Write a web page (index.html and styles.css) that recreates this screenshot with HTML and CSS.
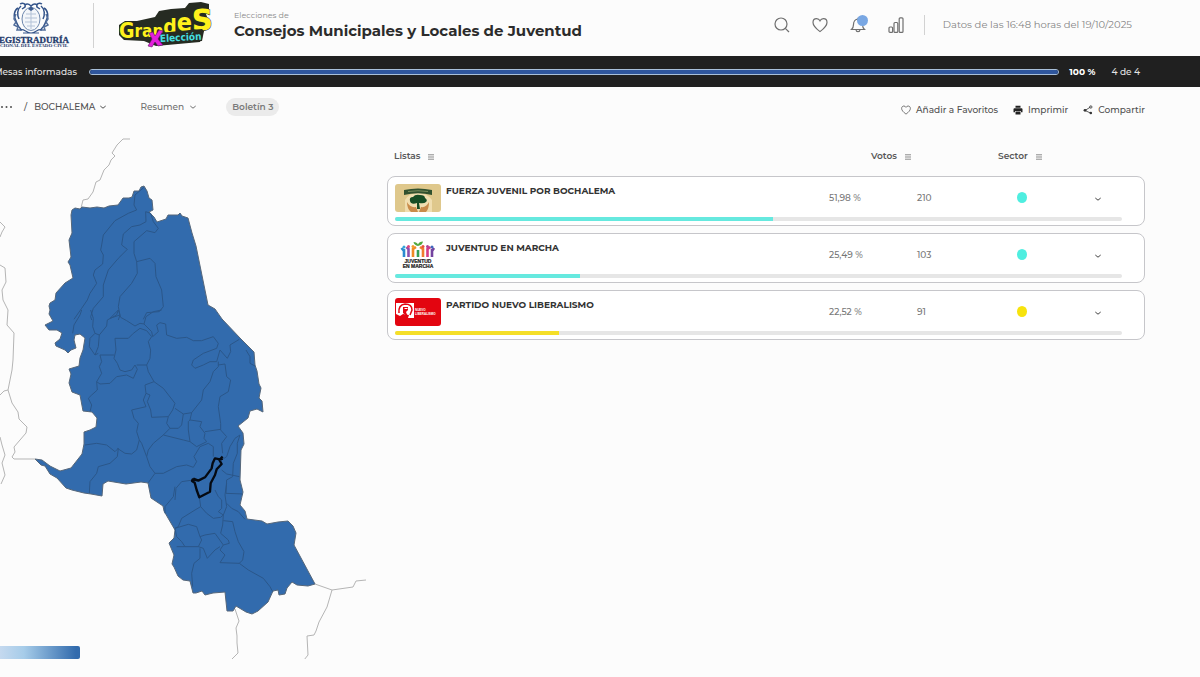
FILE: index.html
```html
<!DOCTYPE html>
<html lang="es">
<head>
<meta charset="utf-8">
<meta name="viewport" content="width=device-width, initial-scale=1">
<title>Consejos Municipales y Locales de Juventud</title>
<link rel="stylesheet" href="styles.css">
</head>
<body>
<svg width="0" height="0" class="defs" aria-hidden="true">
  <symbol id="chev" viewBox="0 0 8 8"><path d="M1.300 3 4 5.200 6.700 3" fill="none" stroke="currentColor" stroke-width="1"/></symbol>
  <symbol id="sort" viewBox="0 0 8 8"><path d="M1 1.800h6M1 4h6M1 6.200h6" fill="none" stroke="currentColor" stroke-width="1"/></symbol>
  <symbol id="heart" viewBox="0 0 16 16"><path d="M8 14.600C3.600 11.200 1 8.600 1 5.400 1 3.200 2.600 1.600 4.600 1.600 6.100 1.600 7.300 2.400 8 3.800 8.700 2.400 9.900 1.600 11.400 1.600 13.400 1.600 15 3.200 15 5.400 15 8.600 12.400 11.200 8 14.600Z" fill="none" stroke="currentColor" stroke-width="1.200"/></symbol>
</svg>

<header class="top">
  <a class="brand" href="#" aria-label="Registraduría Nacional del Estado Civil">
    <svg width="80" height="50" viewBox="-9 0 80 50">
      <g fill="none" stroke="#34548a" stroke-width="1.500">
        <path d="M18 8c-4 2-5 9-2 13 1 3 2 6 5 8M21 6c-4 3-4 9-2 13M44 8c4 2 5 9 2 13-1 3-2 6-5 8M41 6c4 3 4 9 2 13"/>
        <path d="M20 4c3-2 6 0 5 3l-3 2M42 4c-3-2-6 0-5 3l3 2M25 5c2-2 4-1 6 1 2-2 4-3 6-1"/>
        <path d="M16 14l-2 5 2 3-2 3 4 2-1 3 5 0M46 14l2 5-2 3 2 3-4 2 1 3-5 0" stroke="#54709d"/>
        <path d="M20 30c4-2 6 3 11 3s7-5 11-3M23 33h16" stroke-width="1.100"/>
      </g>
      <ellipse cx="31" cy="19" rx="9" ry="11.500" fill="#f3f6fa" stroke="#6d87ad"/>
      <path d="M26 14h10M25 18h12M25 22h12M27 26h8M31 9v20" stroke="#b3c2d7" fill="none"/>
      <path d="M28 9l3-3 3 3-3 2z" fill="#3d5c8f"/>
      <text x="69" y="43" text-anchor="end" class="brand-name">REGISTRADURÍA</text>
      <text x="68" y="47" text-anchor="end" class="brand-sub">NACIONAL DEL ESTADO CIVIL</text>
    </svg>
  </a>
  <span class="rule tall"></span>
  <svg class="campaign" width="94" height="48" viewBox="117 0 94 48" role="img" aria-label="Grandes x Elección">
    <path d="M119 24l6-4 12 0 18-4 4-6 12-2 14-1 4-5 12-1 8 2 0 6-3 4 3 8-3 7-3 3-3 10-44 4-12-5-20-1-5-5z" fill="#262b22"/>
    <text x="119" y="37" class="campaign-main"><tspan font-size="21">G</tspan><tspan font-size="17" dy="-1">ran</tspan><tspan font-size="21" dy="-3">d</tspan><tspan font-size="25" dy="-3">e</tspan><tspan font-size="38" dy="-1">s</tspan></text>
    <path d="M158 42l0-10 44-4 2 2-2 10-43 4z" fill="#262b22"/>
    <path d="M149 32l4-1 2 4 4-6 4 1-5 8 5 6-5 1-3-4-3 5-4-1 4-7z" fill="#e21fdb" stroke="#5c1660" stroke-width=".6"/>
    <text x="160" y="41" class="campaign-word" transform="rotate(-3 159 41)">Elección</text>
  </svg>
  <div class="heading">
    <span class="kicker">Elecciones de</span>
    <h1>Consejos Municipales y Locales de Juventud</h1>
  </div>
  <nav class="tools" aria-label="Herramientas">
    <button type="button" aria-label="Buscar"><svg width="16" height="16" viewBox="0 0 16 16" fill="none" stroke="currentColor" stroke-width="1.200"><circle cx="7" cy="7" r="6"/><path d="M11.300 11.300 15 15"/></svg></button>
    <button type="button" aria-label="Favoritos"><svg width="16" height="16"><use href="#heart"/></svg></button>
    <button type="button" class="bell" aria-label="Notificaciones"><svg width="16" height="16" viewBox="0 0 16 16" fill="none" stroke="currentColor" stroke-width="1.200"><path d="M1.500 12.500c1.800-1.600 2-3 2-5 0-3.300 1.900-5.300 4.500-5.300s4.500 2 4.500 5.300c0 2 .2 3.400 2 5zM6 12.700c.2 2.600 3.800 2.600 4 0M8 2.200V.8"/></svg><span class="dot"></span></button>
    <button type="button" aria-label="Estadísticas"><svg width="16" height="16" viewBox="0 0 16 16" fill="none" stroke="currentColor" stroke-width="1.200"><rect x="1" y="10" width="3.600" height="5.400" rx="1"/><rect x="6" y="5.500" width="3.800" height="9.900" rx="1"/><rect x="11.200" y=".8" width="3.800" height="14.600" rx="1"/></svg></button>
  </nav>
  <span class="rule"></span>
  <p class="stamp">Datos de las 16:48 horas del 19/10/2025</p>
</header>

<section class="status">
  <label for="mesas">Mesas informadas</label>
  <progress id="mesas" value="100" max="100"></progress>
  <strong>100 %</strong>
  <span>4 de 4</span>
</section>

<div class="bar">
  <nav class="crumbs" aria-label="Ruta">
    <button type="button" class="more" aria-label="Niveles superiores"><svg width="12" height="4" viewBox="0 0 12 4" fill="currentColor"><circle cx="2" cy="2" r="1"/><circle cx="6.500" cy="2" r="1"/><circle cx="11" cy="2" r="1"/></svg></button>
    <span class="slash">/</span>
    <button type="button" class="place">BOCHALEMA <svg width="8" height="8"><use href="#chev"/></svg></button>
    <button type="button" class="view">Resumen <svg width="8" height="8"><use href="#chev"/></svg></button>
    <span class="pill">Boletín 3</span>
  </nav>
  <div class="actions">
    <button type="button"><svg width="10" height="10"><use href="#heart"/></svg>Añadir a Favoritos</button>
    <button type="button"><svg width="10" height="10" viewBox="0 0 10 10"><path d="M2.500.8h5v2h-5zM1.500 3.200h7q1 0 1 1v3h-1.500v-1.200h-6v1.200H.5v-3q0-1 1-1zM2.500 6.500h5v3h-5z" fill="#222"/></svg>Imprimir</button>
    <button type="button"><svg width="10" height="10" viewBox="0 0 10 10"><path d="M2 5.500 7.500 2M2 5.500l5.500 2.500" stroke="#333" stroke-width=".8" fill="none"/><circle cx="2" cy="5.300" r="1.400" fill="#333"/><circle cx="7.800" cy="2" r="1.200" fill="none" stroke="#333" stroke-width=".8"/><circle cx="7.800" cy="8" r="1.300" fill="#333"/></svg>Compartir</button>
  </div>
</div>

<main class="content">
  <div class="map">
    <svg viewBox="0 130 387 540" role="img" aria-label="Mapa de Norte de Santander">
      <g class="neighbours">
        <path d="M130 139 123 139 117 145 112 153 115 156 111 160 109 165 104 170 100 180 96 182 93 192 88 199 83 200 81 208"/>
        <path d="M0 222l5 5-3 5-2 5M0 265 5 268 6 282 2 290 3 300 8 310 7 325 14 333 13 360 12 370 8 390 12 403 18 412 19 419 27 427 26 433 14 447 15 452 12 457 14 459 35 459M8 390 4 391 0 395M0 437 2 445 5 455 2 463 5 475 1 484"/>
        <path d="M315 584l17 6 21-3 3-6 10-1M332 590l-5 17-8 15-3 9-2 4-7 1 1 19-4 5M235 609l4 12-3 7 1 8 0 7 1 10-7 7"/>
      </g>
      <path class="land" d="M72 210 75 208 80 209 82 207 90 208 97 207 104 208 109 206 118 205 123 198 129 198 132 197 134 191 139 191 141 187 144 186 147 191 149 198 152 200 153 210 149 212 154 217 157 222 166 219 168 215 178 215 180 213 182 216 188 218 192 233 196 246 208 305 215 309 222 319 240 338 254 352 255 365 257 371 259 384 261 388 259 398 262 401 263 412 257 409 250 411 248 418 238 426 243 433 244 444 241 450 240 480 243 492 240 505 245 511 247 519 262 521 267 524 278 522 288 521 293 526 296 533 294 545 315 584 308 586 297 585 292 582 287 588 285 594 279 595 278 590 273 591 268 602 258 611 252 614 246 612 236 606 233 611 227 611 225 592 213 593 205 595 202 591 196 593 193 593 190 581 183 580 178 576 174 567 172 564 174 555 169 543 174 538 175 530 168 518 164 511 163 506 151 498 148 483 141 482 126 484 120 483 108 481 103 484 102 496 91 494 84 493 72 490 66 488 57 478 50 474 45 466 41 465 35 459 42 460 50 466 60 471 71 468 82 454 84 444 84 432 90 430 96 427 97 418 92 412 83 411 80 395 72 392 69 383 71 374 69 369 79 366 80 358 83 350 85 338 80 334 75 335 74 340 76 348 71 350 68 353 65 350 56 346 55 343 60 339 62 333 57 330 49 330 45 325 53 321 49 314 50 310 49 306 50 303 55 300 56 293 65 283 73 278 70 265 68 262 71 257 69 240 72 233 71 215Z"/>
      <g class="borders" transform="translate(0 130) scale(.3333)">
        <path d="M432 172 405 195 402 225 410 240 385 250 345 272 310 315 305 345 302 360 310 375 308 402 285 420 280 435 290 460 270 490 262 510 245 535 222 568"/>
        <path d="M437 245 438 275 420 285 395 290 370 312 365 345 382 358 355 385 325 420 310 465 310 500 280 535 272 560 275 570"/>
        <path d="M437 245 452 250 460 275 475 295 465 308 440 302 402 335 402 370 410 395 412 430 395 460 360 500 355 530 360 555 330 565"/>
        <path d="M410 395 450 385 465 400 468 440 485 480 490 530 478 545 440 548 430 568M360 555 355 570"/>
      </g>
      <g class="borders" transform="translate(0 310) scale(.3333)">
        <path d="M245 0 240 15 222 45 218 70M272 0 280 25 278 50 285 70 270 85 268 110 285 135 295 130M285 70 298 75 295 110 285 135M355 0 350 15 322 30 320 48 298 75M330 25 355 0 362 22 380 32 405 48 420 40 432 42 438 20 460 5 485 0"/>
        <path d="M432 42 455 65 458 80 475 65 470 45 480 38 497 42 500 75 530 85 560 82 580 92 605 92 640 80 655 100 650 115 610 130 580 150 575 165 585 175 610 165 630 155 650 155 660 120 682 145 692 125 690 105 718 88"/>
        <path d="M345 85 385 85 400 70 420 55 440 62 455 80 445 95 452 120 450 145 440 165 410 165M345 85 348 120 342 145 352 160 360 180 375 185 395 180 405 165 412 178 400 205 380 195 350 200 330 220 300 222 290 215M342 135 300 135 305 155 298 170 305 190 290 215 292 240 275 255 265 265 275 285 270 305"/>
        <path d="M440 165 445 185 462 215 435 225 438 250 430 270 438 290 395 300 402 325 415 340 410 365 418 390 410 420 395 432 375 430 352 415M462 215 490 235 525 280 518 300 505 320 455 322 452 300 442 275 450 255 438 250"/>
        <path d="M525 295 550 312 575 308 605 270 610 240 630 215 640 185 655 170 655 155M655 165 675 162 680 200 692 210 685 245 660 260 655 290 662 340 662 360 680 380 665 400 668 430"/>
        <path d="M575 308 570 330 605 335 600 350 615 370 612 385 620 395 590 410 570 395 565 360 565 335 570 330M615 365 662 358M550 312 545 345 535 355 510 355 500 340 505 320M510 355 490 375 550 390 570 395M490 375 460 400 445 420 440 440 450 470 465 490 445 518M418 390 425 400 440 440"/>
        <path d="M255 405 290 400 320 405 345 425 355 415 352 440 330 460 295 470 290 490 270 515 268 550M465 490 490 490 530 470 560 465 580 472 590 455 582 440 600 410 625 400 640 410 640 440M525 570 528 535 545 515 580 510"/>
        <path d="M665 450 680 440 690 410 705 385 720 375 712 400 712 430 700 460 698 500M665 480 680 492 718 500M698 500 680 510 678 550 728 552M738 120 750 140 750 160 765 168"/>
      </g>
      <g class="borders" transform="translate(120 400) scale(.3333)">
        <path d="M165 260 160 290 135 320 135 340M238 290 242 320 225 330 185 355 175 380 165 385M242 320 260 340 280 355 302 352M285 270 295 290 305 300 305 325 295 335 310 345 302 352M310 345 320 320 315 285 320 250M320 310 335 325 355 335 375 358"/>
        <path d="M310 345 308 375 302 400 325 420 328 430 310 435 285 400 255 405 240 410 245 420 235 440 195 440 185 425 170 410 165 385 205 373 230 380 240 410M170 440 195 440"/>
        <path d="M310 362 338 365 345 395 355 425 372 455 368 480 358 490 300 488 315 465 300 450 310 435M235 440 250 445 262 475 285 450 300 440M240 445 240 475 222 490 215 520 218 560M358 490 385 510 430 535 450 560 458 575"/>
      </g>
      <g class="selected" transform="translate(120 400) scale(.3333)">
        <path d="M308 170 300 178 285 175 278 190 275 205 255 232 235 242 218 238 216 243 224 248 230 270 238 292 270 275 272 250 285 225 290 208 305 192 298 180 308 176M220 236 235 242"/>
      </g>
    </svg>
    <div class="legend"></div>
  </div>

  <table class="lists">
    <thead>
      <tr>
        <th class="h-name"><button type="button">Listas <svg width="8" height="8"><use href="#sort"/></svg></button></th>
        <th class="h-votes"><button type="button">Votos <svg width="8" height="8"><use href="#sort"/></svg></button></th>
        <th class="h-sector"><button type="button">Sector <svg width="8" height="8"><use href="#sort"/></svg></button></th>
      </tr>
    </thead>
    <tbody>
      <tr>
        <td class="name"><svg class="logo" width="46" height="28" viewBox="0 0 46 28" aria-hidden="true"><rect width="46" height="28" rx="3" fill="#dfc88c"/><path d="M10 16q4-7 13-7t14 7v12H10z" fill="#f0deb0"/><path d="M9 6q14-3 28 0v5q-14-3.500-28 0z" fill="#31512f"/><path d="M13 7.500q10-1.500 20 0" stroke="#7b8d5c" fill="none"/><path d="M15 17q-1-4 3-4 2-3 7-2 5 0 5 3 3 2 1 4-2 2-7 1l1 6h-3l0-6q-6 2-7-2z" fill="#174d24"/><path d="M12 18q3 6 9 5l2 5h-7q-4-3-4-10zM34 18q-3 6-8 5l-2 5h7q3-3 3-10z" fill="#c98b4a"/></svg>FUERZA JUVENIL POR BOCHALEMA</td>
        <td class="pct">51,98 %</td><td class="votes">210</td>
        <td class="sector"><span class="spot cyan"></span></td>
        <td class="toggle"><button type="button" aria-label="Desplegar"><svg width="8" height="8"><use href="#chev"/></svg></button></td>
        <td class="share"><progress class="cyan" value="51.98" max="100" aria-label="Porcentaje"></progress></td>
      </tr>
      <tr>
        <td class="name"><svg class="logo" width="46" height="28" viewBox="0 0 46 28" aria-hidden="true"><g stroke-width="2.600" fill="none"><path d="M9 16V8M6.500 7l2.500 3" stroke="#2b8bd0"/><path d="M13.500 16V8l-2-2" stroke="#8a4fb0"/><path d="M18 16V8l3-2" stroke="#f08a24"/><path d="M23 16V9" stroke="#38a055"/><path d="M28 16V8l-3-2" stroke="#ef7d2e"/><path d="M32.500 16V8l3-2" stroke="#d43c87"/><path d="M37 16V8M39 7l-2 3" stroke="#7343a0"/></g><circle cx="9" cy="6" r="1.500" fill="#34a6d8"/><circle cx="13.500" cy="5.500" r="1.500" fill="#e0457b"/><circle cx="18" cy="5.500" r="1.500" fill="#f39a2b"/><circle cx="28" cy="5.500" r="1.500" fill="#e94f3c"/><circle cx="32.500" cy="5.500" r="1.500" fill="#b14097"/><circle cx="37" cy="6" r="1.500" fill="#4068bd"/><path d="M23 5Q19 4 18.500 1 22 1 23 3.500 24 .5 28 .5 27.500 4 23 5z" fill="#52a83e"/><text x="23" y="22" text-anchor="middle" class="logo-text">JUVENTUD</text><text x="23" y="27" text-anchor="middle" class="logo-text">EN MARCHA</text></svg>JUVENTUD EN MARCHA</td>
        <td class="pct">25,49 %</td><td class="votes">103</td>
        <td class="sector"><span class="spot cyan"></span></td>
        <td class="toggle"><button type="button" aria-label="Desplegar"><svg width="8" height="8"><use href="#chev"/></svg></button></td>
        <td class="share"><progress class="cyan" value="25.49" max="100" aria-label="Porcentaje"></progress></td>
      </tr>
      <tr>
        <td class="name"><svg class="logo" width="46" height="28" viewBox="0 0 46 28" aria-hidden="true"><rect width="46" height="28" rx="3" fill="#e30510"/><path d="M1 5h18v15H13l1-3-6-1-3 2-4-2z" fill="#fff"/><path d="M4 15q-1-8 6-9 7 0 7 6l-2 5" fill="none" stroke="#e30510" stroke-width="1.500"/><path d="M8 9h5v3l-2 2 2 5-5-4z" fill="#e30510"/><path d="M9.500 10.500h3" stroke="#fff"/><text x="20" y="13" class="logo-white">NUEVO</text><text x="20" y="17" class="logo-white">LIBERALISMO</text></svg>PARTIDO NUEVO LIBERALISMO</td>
        <td class="pct">22,52 %</td><td class="votes">91</td>
        <td class="sector"><span class="spot yellow"></span></td>
        <td class="toggle"><button type="button" aria-label="Desplegar"><svg width="8" height="8"><use href="#chev"/></svg></button></td>
        <td class="share"><progress class="yellow" value="22.52" max="100" aria-label="Porcentaje"></progress></td>
      </tr>
    </tbody>
  </table>
</main>
</body>
</html>
```
FILE: styles.css
```css
* { box-sizing: border-box; }
body {
  margin: 0;
  overflow-x: hidden;
  background: #fcfcfc;
  color: #505050;
  font: 500 9px/14px Montserrat, Inter, sans-serif;
}
button {
  display: inline-flex;
  align-items: center;
  padding: 0;
  border: 0;
  background: none;
  color: inherit;
  font: inherit;
}
svg { flex: none; display: block; }
.defs { position: absolute; }

.top {
  display: flex;
  align-items: center;
  height: 56px;
  padding: 0 68px 6px 0;
}
.brand { margin-left: -9px; }
.brand svg { overflow: visible; }
.brand-name { font: bold 9px "Liberation Serif", serif; fill: #1f3a6b; stroke: #1f3a6b; stroke-width: .3; }
.brand-sub { font: bold 5px "Liberation Serif", serif; fill: #1f3a6b; }
.rule { width: 1px; height: 20px; background: #d2d2d2; }
.rule.tall { height: 45px; margin: 0 23px 0 22px; }
.campaign { overflow: visible; }
.campaign-main {
  font-family: "DejaVu Sans Condensed", "DejaVu Sans", sans-serif;
  font-weight: bold;
  fill: #fff11c;
  stroke: #262b22;
  stroke-width: 1;
  stroke-linejoin: round;
  paint-order: stroke;
}
.campaign-word {
  font: bold 10px "DejaVu Sans Condensed", "DejaVu Sans", sans-serif;
  fill: #45dfe0;
}
.heading { margin-left: 23px; }
.kicker { display: block; color: #8a8a8a; font-size: 8px; font-weight: 400; line-height: 12px; }
h1 { margin: 0; color: #2c2c2c; font-size: 15px; line-height: 20px; font-weight: 700; white-space: nowrap; }
.tools { display: flex; gap: 22px; margin: 0 20px 0 auto; color: #6f6f6f; }
.bell { position: relative; }
.dot {
  position: absolute;
  top: -2px;
  right: -2px;
  width: 11px;
  height: 11px;
  border-radius: 50%;
  background: #79a7e3;
}
.stamp { margin: 0 0 0 18px; color: #858585; font-size: 10px; font-weight: 400; white-space: nowrap; }

.status {
  display: flex;
  align-items: center;
  height: 31px;
  margin-left: -6px;
  padding-right: 60px;
  background: #202020;
  color: #e4e4e4;
  white-space: nowrap;
}
.status strong { margin: 0 16px 0 10px; color: #fff; }
progress {
  display: block;
  width: 100%;
  height: 4px;
  border: 0;
  appearance: none;
  background: #e6e6e6;
  border-radius: 2px;
  overflow: hidden;
}
progress::-webkit-progress-bar { background: transparent; }
.status progress {
  flex: 1;
  height: 6px;
  margin-left: 12px;
  border: 1px solid #a8bfd9;
  border-radius: 3px;
}
.status progress::-webkit-progress-value { background: #2f569d; }
progress.cyan::-webkit-progress-value { background: #66e9df; }
progress.yellow::-webkit-progress-value { background: #f5df28; }

.bar { display: flex; justify-content: space-between; padding: 11px 55px 0 0; }
.crumbs, .actions { display: flex; align-items: center; }
.crumbs { height: 18px; }
.slash { margin: 0 7px 0 12px; }
.place { gap: 4px; margin-right: 33px; }
.view { gap: 5px; margin-right: 29px; color: #707070; }
.pill { padding: 2px 6px; border-radius: 9px; background: #ebebeb; color: #7a7a7a; font-weight: 600; }
.actions { gap: 15px; padding-top: 5px; }
.actions button { gap: 5px; }

.content {
  display: grid;
  grid-template-columns: minmax(0, 387fr) minmax(0, 758fr);
  padding-right: 55px;
}
.map { padding-top: 13px; }
.map > svg { width: 100%; margin-bottom: -24px; }
.neighbours path { fill: none; stroke: #b5b5b5; stroke-width: 1; }
.land { fill: #326bad; stroke: #56677a; stroke-width: 1; stroke-linejoin: round; }
.borders path { fill: none; stroke: #2a568a; stroke-width: 3; stroke-linejoin: round; }
.selected { fill: none; stroke: #050a12; stroke-width: 7; stroke-linejoin: round; }
.legend {
  width: 80px;
  height: 13px;
  border-radius: 0 2px 2px 0;
  background: linear-gradient(90deg, #c5d9ef, #a6cce9 30%, #326bad 95%);
}

.lists, .lists tbody, .lists thead { display: block; }
.lists { padding-top: 32px; }
.lists tr {
  display: grid;
  grid-template-columns: minmax(0, 1fr) 88px 80px 87px 38px;
  padding: 0 22px 0 7px;
}
.lists th, .lists td { padding: 0; }
.lists th { text-align: left; font-weight: 600; color: #585858; }
.lists th button { gap: 7px; }
.lists th svg { color: #8b8b8b; margin-top: 2px; }
.h-votes { grid-column: 2 / 4; }
.lists .h-votes { padding-left: 41px; }
.lists tbody { display: grid; gap: 7px; margin-top: 13px; }
.lists tbody tr {
  grid-template-rows: 33px 4px;
  min-height: 50px;
  padding-top: 7px;
  border: 1px solid #c6c6ca;
  border-radius: 8px;
  background: #fff;
}
.name { display: flex; gap: 5px; color: #333; font-weight: 700; }
.pct, .votes { color: #777; }
.lists .pct, .lists .votes { padding-top: 7px; }
.lists .sector { padding: 8px 0 0 20px; }
.lists .toggle { padding: 11px 0 0 10px; color: #444; }
.toggle button { display: block; }
.share { grid-column: 1 / -1; }
.spot { display: block; width: 10px; height: 11px; border-radius: 50%; }
.spot.cyan { background: #4feee0; }
.spot.yellow { background: #f7e30d; }
.logo-text { font: bold 5px "Liberation Sans", sans-serif; fill: #222; stroke: #222; stroke-width: .2; }
.logo-white { font: bold 3px "Liberation Sans", sans-serif; fill: #fff; }
```
